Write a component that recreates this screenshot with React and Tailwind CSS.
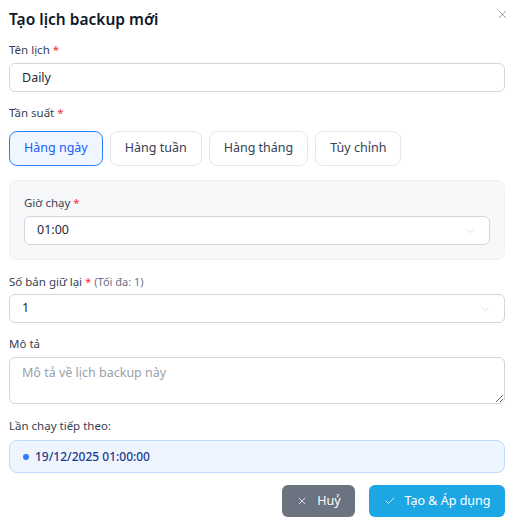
import React, { useState } from 'react'
import { X, Check, ChevronDown } from 'lucide-react'

const FREQS = ['Hàng ngày', 'Hàng tuần', 'Hàng tháng', 'Tùy chỉnh']

function Label({ children, required, hint }) {
  return (
    <div className="text-[11.5px] leading-4 text-gray-700">
      {children}
      {required && <span className="text-red-500"> *</span>}
      {hint && <span className="text-gray-500 text-[11px]"> {hint}</span>}
    </div>
  )
}

function SelectBox({ value }) {
  return (
    <div className="h-[29px] rounded-md border border-gray-300 bg-white flex items-center justify-between pl-3 pr-3 text-[12.5px] text-gray-800">
      <span>{value}</span>
      <ChevronDown className="w-[14px] h-[14px] text-gray-300" strokeWidth={1.2} />
    </div>
  )
}

export default function App() {
  const [freq, setFreq] = useState('Hàng ngày')
  const [name, setName] = useState('Daily')

  return (
    <div className="w-[514px] h-[522px] bg-white px-[9px] pt-2" style={{ fontFamily: '"Noto Sans", "Open Sans", sans-serif' }}>
      <div className="flex items-center justify-between h-6">
        <h2 className="text-[15.5px] font-semibold text-gray-900">Tạo lịch backup mới</h2>
        <X className="w-[13px] h-[13px] text-gray-500 -mt-3 -mr-1" strokeWidth={1.3} />
      </div>

      <div className="mt-[10px]">
        <Label required>Tên lịch</Label>
        <input
          value={name}
          onChange={e => setName(e.target.value)}
          className="mt-[5px] w-full h-[29px] rounded-md border border-gray-300 px-3 text-[12.5px] text-gray-800 outline-none"
        />
      </div>

      <div className="mt-[13px]">
        <Label required>Tần suất</Label>
        <div className="mt-[10px] flex gap-[7px]">
          {FREQS.map(f => (
            <button
              key={f}
              onClick={() => setFreq(f)}
              className={
                f === freq
                  ? 'h-[35px] px-[14px] rounded-lg border border-blue-500 bg-blue-50 text-blue-600 text-[12.5px]'
                  : 'h-[35px] px-[14px] rounded-lg border border-gray-200 bg-white text-gray-700 text-[12.5px]'
              }
            >
              {f}
            </button>
          ))}
        </div>
      </div>

      {/* run time */}
      <div className="mt-[14px] rounded-lg bg-[#f7f8fa] border border-[#f0f1f3] px-[14px] pt-[14px] pb-[14px]">
        <Label required>Giờ chạy</Label>
        <div className="mt-[5px]">
          <SelectBox value="01:00" />
        </div>
      </div>

      <div className="mt-[14px]">
        <Label required hint="(Tối đa: 1)">Số bản giữ lại</Label>
        <div className="mt-[4px]">
          <SelectBox value="1" />
        </div>
      </div>

      <div className="mt-[13px]">
        <Label>Mô tả</Label>
        <textarea
          placeholder="Mô tả về lịch backup này"
          className="mt-[5px] block w-full h-[47px] rounded-md border border-gray-300 px-3 py-[6px] text-[12.5px] text-gray-800 placeholder:text-gray-400 outline-none resize-y"
        />
      </div>

      <div className="mt-[14px]">
        <Label>Lần chạy tiếp theo:</Label>
        <div className="mt-[6px] h-[33px] rounded-lg border border-blue-200 bg-[#eef5ff] flex items-center pl-[13px] gap-[6px]">
          <span className="w-[6px] h-[6px] rounded-full bg-blue-500" />
          <span className="text-[12px] font-medium text-[#1e3a8a]">19/12/2025 01:00:00</span>
        </div>
      </div>

      <div className="mt-3 flex justify-end gap-[14px]">
        <button className="h-8 w-[73px] justify-center rounded-md bg-[#6b7280] text-white text-[12.5px] flex items-center gap-[9px]">
          <X className="w-[12px] h-[12px]" strokeWidth={1.5} />
          Huỷ
        </button>
        <button className="h-8 w-[136px] justify-center rounded-md bg-[#1ca7e4] text-white text-[12.5px] flex items-center gap-[9px]">
          <Check className="w-[12px] h-[12px]" strokeWidth={1.5} />
          Tạo &amp; Áp dụng
        </button>
      </div>
    </div>
  )
}
